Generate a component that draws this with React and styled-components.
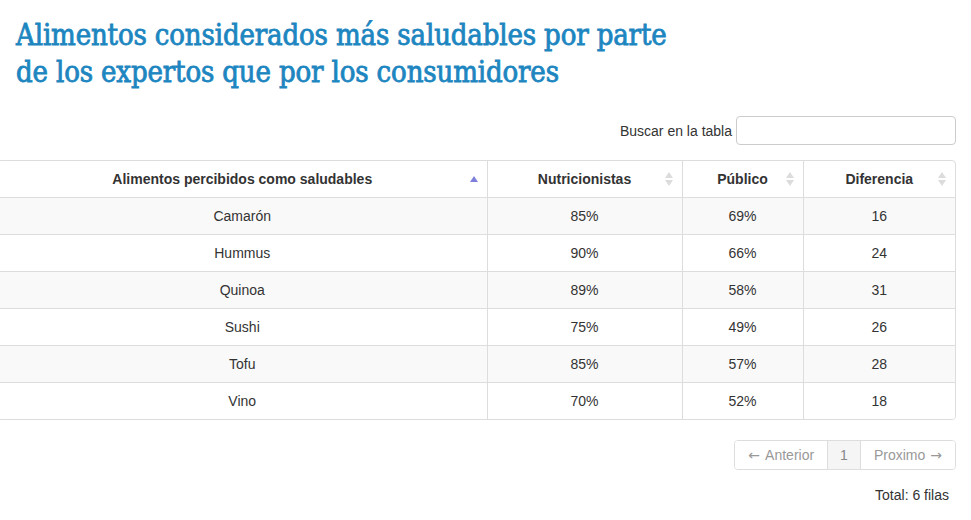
import React from "react";
import styled, { createGlobalStyle } from "styled-components";

const Global = createGlobalStyle`
  html, body { margin: 0; padding: 0; background: #fff; }
  body { font-family: "Liberation Sans", Arial, sans-serif; color: #333; overflow: hidden; }
`;

const Page = styled.div`
  width: 971px;
  height: 520px;
  overflow: hidden;
`;

const Title = styled.h1`
  margin: 0;
  padding: 17px 0 0 16px;
  width: 672px;
  font-family: "DejaVu Serif", "Liberation Serif", serif;
  font-stretch: condensed;
  font-weight: 400;
  font-size: 29px;
  line-height: 37px;
  color: #1d86c0;
  letter-spacing: -0.15px;
  -webkit-text-stroke: 0.8px #1d86c0;
`;

const SearchBar = styled.div`
  display: flex;
  justify-content: flex-end;
  align-items: center;
  gap: 4px;
  padding: 25px 15px 0 0;
  font-size: 14px;
  color: #333;
`;

const SearchInput = styled.input`
  box-sizing: border-box;
  width: 220px;
  height: 29px;
  border: 1px solid #ccc;
  border-radius: 4px;
  padding: 4px 8px;
  font-size: 14px;
  outline: none;
`;

const TableWrap = styled.div`
  margin: 15px 0 0 -3px;
  width: 957px;
  border: 1px solid #ddd;
  border-radius: 4px;
  overflow: hidden;
`;

const Table = styled.table`
  width: 100%;
  border-collapse: collapse;
  table-layout: fixed;
  font-size: 14px;
`;

const Th = styled.th`
  position: relative;
  height: 36px;
  padding: 0 8px;
  text-align: center;
  font-weight: 700;
  color: #333;
  border-left: ${(p) => (p.$first ? "none" : "1px solid #ddd")};
  border-bottom: 1px solid #ddd;
`;

const Td = styled.td`
  height: 36px;
  padding: 0 8px;
  text-align: center;
  color: #333;
  border-left: ${(p) => (p.$first ? "none" : "1px solid #ddd")};
  border-top: 1px solid #ddd;
`;

const Tr = styled.tr`
  background: ${(p) => (p.$odd ? "#f9f9f9" : "#fff")};
`;

const SortIcon = styled.span`
  position: absolute;
  right: 8px;
  top: 50%;
  transform: translateY(-50%);
  display: flex;
  flex-direction: column;
  gap: 2px;
  width: 9px;
`;

const Tri = styled.span`
  width: 0;
  height: 0;
  border-left: 4.5px solid transparent;
  border-right: 4.5px solid transparent;
  ${(p) =>
    p.$down
      ? `border-top: 6px solid ${p.$color};`
      : `border-bottom: 6px solid ${p.$color};`}
`;

const Footer = styled.div`
  display: flex;
  flex-direction: column;
  align-items: flex-end;
  padding: 20px 15px 0 0;
`;

const Pager = styled.div`
  display: flex;
  border: 1px solid #ddd;
  border-radius: 4px;
  overflow: hidden;
  height: 28px;
`;

const PageBtn = styled.span`
  display: flex;
  align-items: center;
  gap: 5px;
  padding: 0 ${(p) => (p.$active ? "12px" : "13px")};
  font-size: 14px;
  color: ${(p) => (p.$active ? "#888" : "#999")};
  background: ${(p) => (p.$active ? "#f5f5f5" : "#fff")};
  border-left: ${(p) => (p.$first ? "none" : "1px solid #ddd")};
`;

const Arrow = styled.span`
  font-family: "DejaVu Sans", sans-serif;
  font-size: 14px;
`;

const Total = styled.div`
  margin-top: 17px;
  padding-right: 7px;
  font-size: 14px;
  color: #333;
`;

const rows = [
  ["Camarón", "85%", "69%", "16"],
  ["Hummus", "90%", "66%", "24"],
  ["Quinoa", "89%", "58%", "31"],
  ["Sushi", "75%", "49%", "26"],
  ["Tofu", "85%", "57%", "28"],
  ["Vino", "70%", "52%", "18"],
];

const headers = [
  "Alimentos percibidos como saludables",
  "Nutricionistas",
  "Público",
  "Diferencia",
];

function Sort({ active }) {
  if (active)
    return (
      <SortIcon>
        <Tri $color="#7f7fdc" />
      </SortIcon>
    );
  return (
    <SortIcon>
      <Tri $color="#dcdcdc" />
      <Tri $down $color="#dcdcdc" />
    </SortIcon>
  );
}

export default function App() {
  return (
    <Page>
      <Global />
      <Title>
        Alimentos considerados más saludables por parte de los expertos que
        por los consumidores
      </Title>
      <SearchBar>
        <span>Buscar en la tabla</span>
        <SearchInput type="text" />
      </SearchBar>
      <TableWrap>
        <Table>
          <colgroup>
            <col style={{ width: "489px" }} />
            <col style={{ width: "195px" }} />
            <col style={{ width: "121px" }} />
            <col />
          </colgroup>
          <thead>
            <tr>
              {headers.map((h, i) => (
                <Th key={h} $first={i === 0}>
                  {h}
                  <Sort active={i === 0} />
                </Th>
              ))}
            </tr>
          </thead>
          <tbody>
            {rows.map((r, ri) => (
              <Tr key={r[0]} $odd={ri % 2 === 0}>
                {r.map((c, ci) => (
                  <Td key={ci} $first={ci === 0}>
                    {c}
                  </Td>
                ))}
              </Tr>
            ))}
          </tbody>
        </Table>
      </TableWrap>
      <Footer>
        <Pager>
          <PageBtn $first>
            <Arrow>←</Arrow>Anterior
          </PageBtn>
          <PageBtn $active>1</PageBtn>
          <PageBtn>
            Proximo<Arrow>→</Arrow>
          </PageBtn>
        </Pager>
        <Total>Total: 6 filas</Total>
      </Footer>
    </Page>
  );
}
